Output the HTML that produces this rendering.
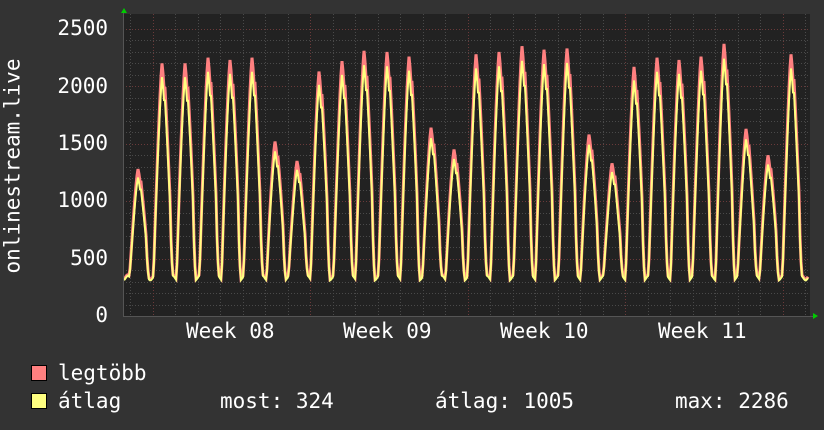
<!DOCTYPE html>
<html><head><meta charset="utf-8"><style>
html,body{margin:0;padding:0;background:#333;}
body{width:824px;height:430px;overflow:hidden;position:relative;font-family:"DejaVu Sans Mono","Liberation Mono",monospace;color:#fff;}
.t{position:absolute;font-size:21px;line-height:21px;white-space:pre;}
.sw{position:absolute;width:14px;height:14px;border:1px solid #000;}
</style></head><body>
<svg id="g" width="824" height="430" style="position:absolute;left:0;top:0"></svg>
<div class="t" style="right:716px;top:18px">2500</div>
<div class="t" style="right:716px;top:76px">2000</div>
<div class="t" style="right:716px;top:133px">1500</div>
<div class="t" style="right:716px;top:190px">1000</div>
<div class="t" style="right:716px;top:248px">500</div>
<div class="t" style="right:716px;top:305px">0</div>
<div class="t" style="left:186px;top:321px">Week 08</div>
<div class="t" style="left:343px;top:321px">Week 09</div>
<div class="t" style="left:500px;top:321px">Week 10</div>
<div class="t" style="left:658px;top:321px">Week 11</div>
<div class="t" style="left:13px;top:166px;transform:translate(-50%,-50%) rotate(-90deg);">onlinestream.live</div>
<div class="sw" style="left:31px;top:365px;background:#ff8080"></div>
<div class="sw" style="left:31px;top:393px;background:#ffff80"></div>
<div class="t" style="left:58px;top:363px">legtöbb</div>
<div class="t" style="left:58px;top:391px">átlag</div>
<div class="t" style="left:220px;top:391px">most: 324</div>
<div class="t" style="left:435px;top:391px">átlag: 1005</div>
<div class="t" style="left:675px;top:391px">max: 2286</div>
<script>
var s=document.getElementById('g'),h='';
var L=123,R=810,T=14,B=316,k=0.1148;
h+='<rect x="'+L+'" y="'+T+'" width="'+(R-L)+'" height="'+(B-T)+'" fill="#222"/>';
for(var v=100;v<=2500;v+=100){var y=Math.round(B-v*k)+0.5;h+='<line x1="'+L+'" x2="'+R+'" y1="'+y+'" y2="'+y+'" stroke="'+(v%500==0?'#6a3a3a':'#4a4a4a')+'" stroke-dasharray="1,2"/>';}
for(var i=0;i<32;i++){var x=Math.round(152.5+(i-1)*22.5*1)+0.5;if(x<L||x>R)continue;var maj=((i-1)%7==0);h+='<line x1="'+x+'" x2="'+x+'" y1="'+T+'" y2="'+B+'" stroke="'+(maj?'#6a3a3a':'#4a4a4a')+'" stroke-dasharray="1,2"/>';}
var pk=[[138,1280],[162,2200],[185,2200],[208,2250],[230,2230],[252,2250],[275,1520],[297,1350],[319,2130],[342,2220],[364,2310],[387,2300],[409,2260],[431,1640],[454,1450],[476,2280],[499,2300],[522,2350],[544,2320],[567,2330],[589,1580],[612,1330],[634,2170],[657,2250],[679,2230],[701,2260],[724,2370],[746,1630],[768,1400],[791,2280]];
function val(x,avg){var best=null,bd=1e9;for(var j=0;j<pk.length;j++){var d=x-pk[j][0];if(Math.abs(d)<Math.abs(bd)){bd=d;best=pk[j];}}
var w=bd<0?8.5:10.5;var f=Math.max(0,1-Math.pow(Math.abs(bd)/w,1.3));if(bd>2&&bd<9)f+=0.08;
var mn=340+20*Math.sin(x*0.7);var p=best[1];if(avg)p=p*0.95;var v=mn+(p-mn)*Math.min(1,f);if(avg)v-=10;return v;}
var a='',b='';for(var x=L+1;x<=R-2;x++){a+=(x==L+1?'M':'L')+x+','+(B-val(x,0)*k).toFixed(1);b+=(x==L+1?'M':'L')+x+','+(B-val(x,1)*k).toFixed(1);}
h+='<path d="'+a+'" fill="none" stroke="#ff8080" stroke-width="3"/>';
h+='<path d="'+b+'" fill="none" stroke="#ffff80" stroke-width="2"/>';
h+='<line x1="'+L+'.5" x2="'+L+'.5" y1="12" y2="'+B+'" stroke="#555"/>';
h+='<line x1="'+L+'" x2="'+(R+3)+'" y1="'+B+'.5" y2="'+B+'.5" stroke="#555"/>';
h+='<polygon points="121,13 127,13 124,8" fill="#0c0"/><polygon points="813,313 813,319 818,316" fill="#0c0"/>';
s.innerHTML=h;
</script>
</body></html>
